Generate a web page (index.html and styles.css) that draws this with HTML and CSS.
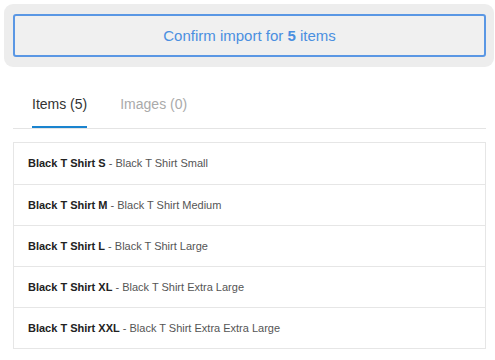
FILE: index.html
```html
<!doctype html>
<html lang="en">
  <head>
    <meta charset="utf-8">
    <meta name="viewport" content="width=device-width, initial-scale=1">
    <title>Confirm Import</title>
    <link rel="stylesheet" href="styles.css">
  </head>
  <body>
    <div class="confirm-bar">
      <button class="confirm-btn">Confirm import for <b>5</b> items</button>
    </div>

    <ul class="tabs">
      <li class="tab active">Items (5)</li>
      <li class="tab">Images (0)</li>
    </ul>

    <ul class="item-list">
      <li><b>Black T Shirt S</b> - Black T Shirt Small</li>
      <li><b>Black T Shirt M</b> - Black T Shirt Medium</li>
      <li><b>Black T Shirt L</b> - Black T Shirt Large</li>
      <li><b>Black T Shirt XL</b> - Black T Shirt Extra Large</li>
      <li><b>Black T Shirt XXL</b> - Black T Shirt Extra Extra Large</li>
    </ul>
  </body>
</html>
```

FILE: styles.css
```css
* {
  box-sizing: border-box;
}
body {
  margin: 0;
  font-family: "Liberation Sans", Arial, sans-serif;
  background: #fff;
  color: #333;
}

.confirm-bar {
  margin: 4px 1px 0 4px;
  padding: 10px 8px 10px 9px;
  background: #ededed;
  border-radius: 9px;
}

.confirm-btn {
  display: block;
  width: 100%;
  height: 43px;
  background: #f0f0f0;
  border: 2px solid #5a97e4;
  border-radius: 3px;
  color: #4a8fe0;
  font-family: inherit;
  font-size: 15px;
}

.tabs {
  list-style: none;
  display: flex;
  gap: 33px;
  margin: 20px 9px 0 13px;
  padding: 0 0 0 19px;
  border-bottom: 1px solid #e4e4e4;
}

.tab {
  padding: 7px 0 12px;
  line-height: 20px;
  font-size: 14px;
  color: #aaa;
  border-bottom: 2px solid transparent;
}

.tab.active {
  color: #333;
  border-bottom-color: #1a84cf;
}

.item-list {
  list-style: none;
  margin: 13px 9px 0 13px;
  padding: 0;
  border: 1px solid #e6e6e6;
}

.item-list li {
  height: 41px;
  line-height: 41px;
  padding: 0 14px;
  font-size: 11px;
  color: #555;
}

.item-list li + li {
  border-top: 1px solid #e6e6e6;
}

.item-list b {
  color: #222;
}
```
